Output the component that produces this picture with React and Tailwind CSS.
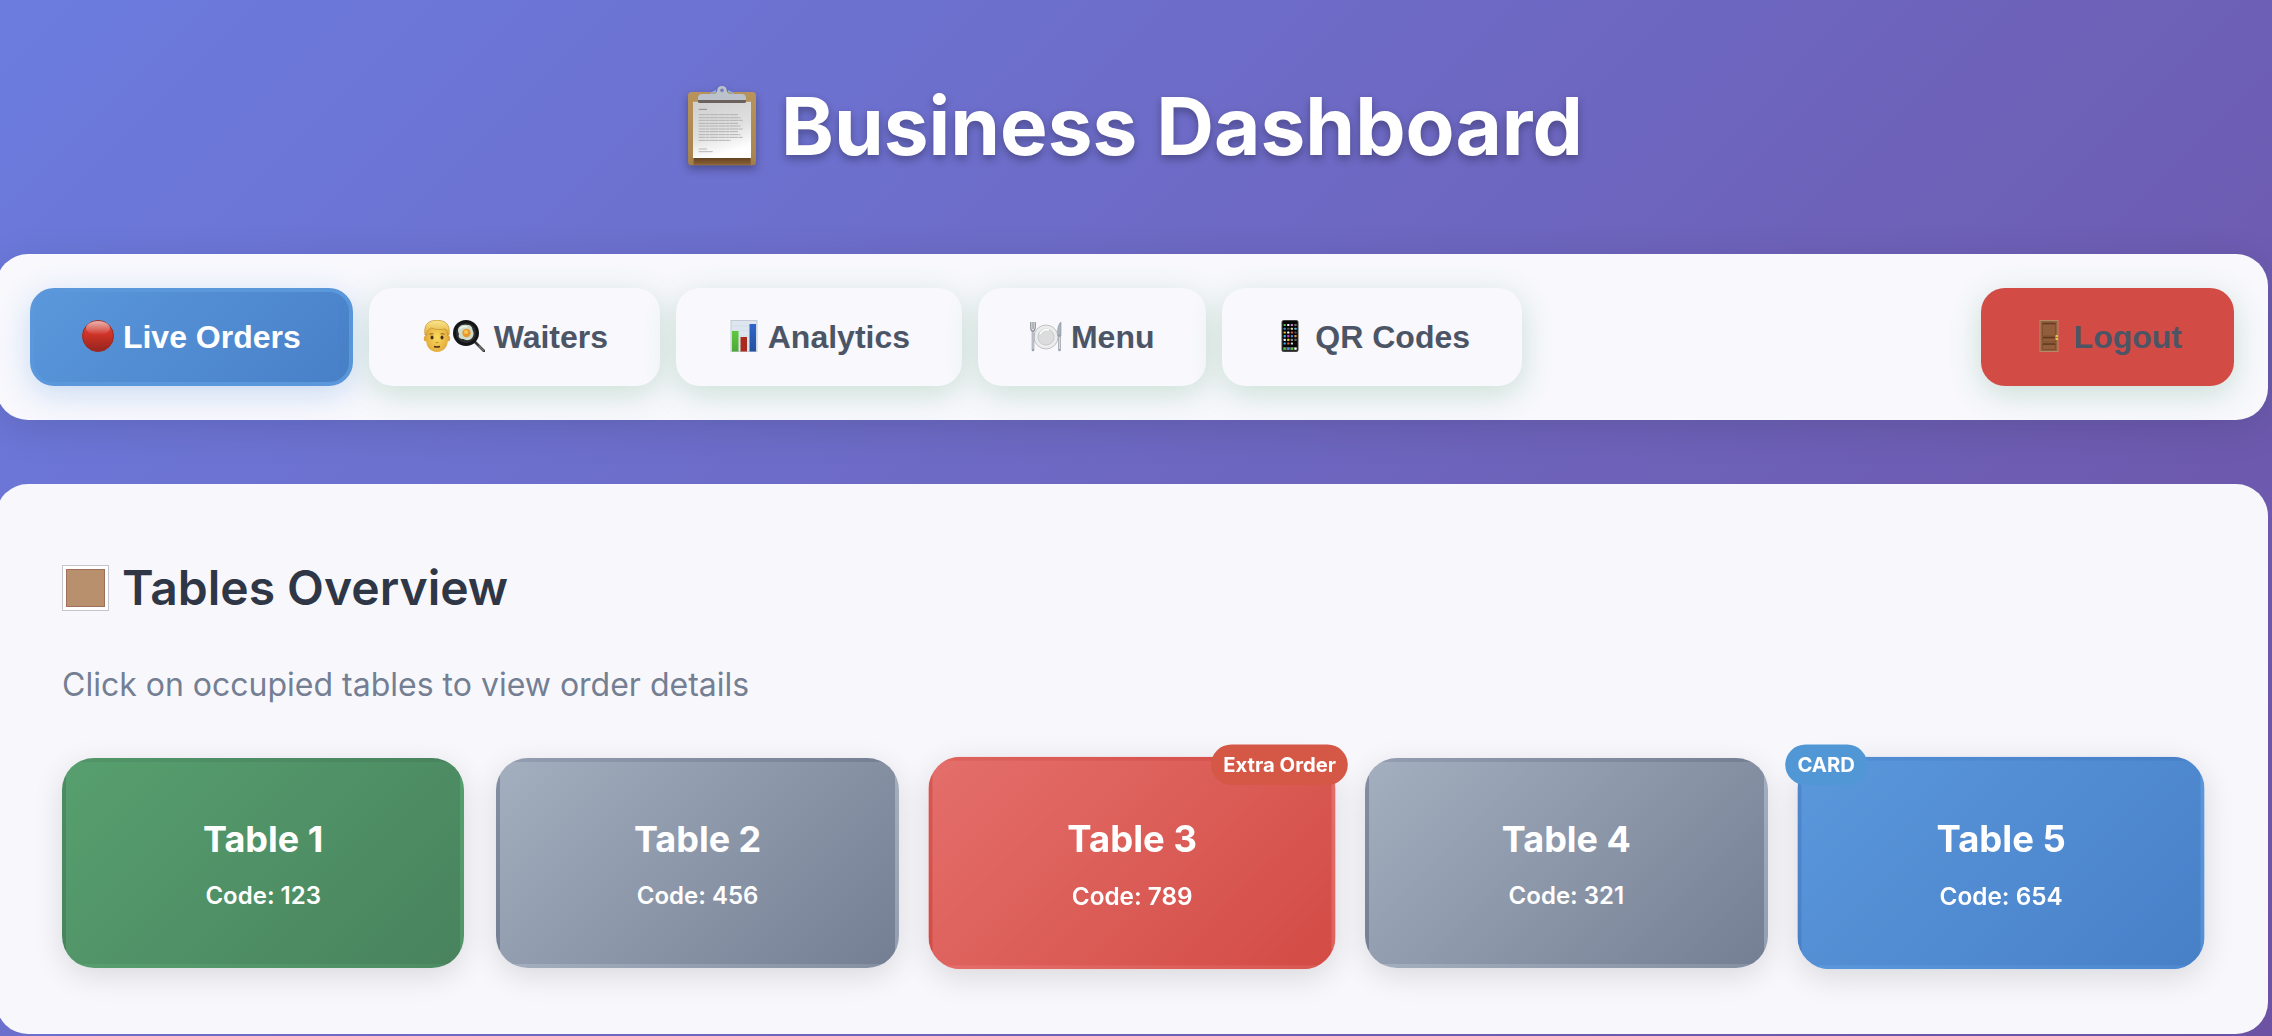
import { useState } from 'react'
import clsx from 'clsx'

function ClipboardIcon({ className }) {
  const lines = [158, 167, 175, 184, 192, 201, 209, 218, 226, 235]
  return (
    <svg viewBox="63 75 240 240" className={className} aria-hidden="true">
      <defs>
        <linearGradient id="board" x1="0" y1="0" x2="0" y2="1">
          <stop offset="0" stopColor="#b8935a" />
          <stop offset="0.85" stopColor="#a98550" />
          <stop offset="1" stopColor="#a07c4b" />
        </linearGradient>
        <linearGradient id="paper" x1="0" y1="0" x2="0.3" y2="1">
          <stop offset="0" stopColor="#cfcfcf" />
          <stop offset="0.6" stopColor="#e0e0e0" />
          <stop offset="1" stopColor="#ffffff" />
        </linearGradient>
        <linearGradient id="paperShade" x1="0" y1="0" x2="0" y2="1">
          <stop offset="0" stopColor="#5d3f1f" />
          <stop offset="1" stopColor="#8a6035" />
        </linearGradient>
      </defs>
      <rect x="84" y="93" width="204" height="220" rx="11" fill="url(#board)" />
      <path d="M101 288h171v23H101z" fill="url(#paperShade)" />
      <path d="M99 122h174v169H99z" fill="url(#paper)" />
      <path d="M99 288h174v3H99z" fill="#fff" />
      <path d="M116 145h25" stroke="#8d8d8d" strokeWidth="3" />
      {lines.map((y, i) => (
        <path key={y} d={`M116 ${y + 3}h${i === 9 ? 96 : 118 + (i % 3) * 7}`} stroke="#b2b2b2" strokeWidth="3" strokeDasharray="19 1 12 1 26 1" />
      ))}
      <path d="M116 264h25M116 272h42" stroke="#b8b8b8" strokeWidth="3" />
      <path d="M114 116h144v6q0 4-5 4H119q-5 0-5-4z" fill="#6b625c" />
      <path d="M152 98l16-9M220 98l-16-9" stroke="#8fb0dc" strokeWidth="5" />
      <path d="M114 117v-6q0-12 13-12h30c11 0 14-4 15-13 1-7 6-11 14-11s13 4 14 11c1 9 4 13 15 13h30q13 0 13 12v6z" fill="#bcc2cb" />
      <circle cx="186" cy="88" r="5" fill="#6a70c8" stroke="#939aa8" strokeWidth="2" />
    </svg>
  )
}

function RedCircleIcon({ className }) {
  return (
    <svg viewBox="0 0 32 32" className={className} aria-hidden="true">
      <defs>
        <linearGradient id="ball" x1="0" y1="0" x2="0" y2="1">
          <stop offset="0" stopColor="#d4534b" />
          <stop offset="0.45" stopColor="#cf3226" />
          <stop offset="1" stopColor="#93251f" />
        </linearGradient>
        <linearGradient id="gloss" x1="0" y1="0" x2="0" y2="1">
          <stop offset="0" stopColor="#fff" stopOpacity="0.55" />
          <stop offset="1" stopColor="#fff" stopOpacity="0" />
        </linearGradient>
      </defs>
      <circle cx="16" cy="16" r="15.5" fill="url(#ball)" stroke="#a02a22" />
      <ellipse cx="16" cy="8" rx="12" ry="7" fill="url(#gloss)" />
    </svg>
  )
}

function CookIcon({ className }) {
  return (
    <svg viewBox="0 0 64 32" className={className} aria-hidden="true">
      <defs>
        <radialGradient id="face" cx="0.5" cy="0.5" r="0.6">
          <stop offset="0" stopColor="#fadb5c" />
          <stop offset="1" stopColor="#e0a63a" />
        </radialGradient>
        <linearGradient id="hair" x1="0" y1="0" x2="0" y2="1">
          <stop offset="0" stopColor="#fae68c" />
          <stop offset="1" stopColor="#e3ae3a" />
        </linearGradient>
      </defs>
      <ellipse cx="4.6" cy="18.5" rx="1.8" ry="2.8" fill="#dfa638" />
      <ellipse cx="27.4" cy="18.5" rx="1.8" ry="2.8" fill="#dfa638" />
      <path d="M5 11c1-6 5-8 11-8s10 2 11 8v8c0 8-4.5 13-11 13S5 27 5 19z" fill="url(#face)" />
      <path d="M4 15C2.500 5 7 .3 16 .3S29.500 5 28 15l-1.300.5c0-3-.7-5.200-2-6.500-6 1-11 .5-14.500-1C7.500 9 6 11 5.300 15.500z" fill="url(#hair)" stroke="#c4902c" strokeWidth="0.7" />
      <path d="M8.5 14.500q2-1.500 4-.5M19.500 14q2-1 4 .5" fill="none" stroke="#a9742a" strokeWidth="1.2" />
      <ellipse cx="11" cy="17.5" rx="1.5" ry="2" fill="#4a2f18" />
      <ellipse cx="21" cy="17.5" rx="1.5" ry="2" fill="#4a2f18" />
      <path d="M14.500 22.500h3" stroke="#c98d2c" strokeWidth="1.2" />
      <path d="M13 26.500q3 1 6 0" fill="none" stroke="#5b2e17" strokeWidth="1.4" />
      <path d="M54 22l9 9" stroke="#3a3a3a" strokeWidth="2.6" strokeLinecap="round" />
      <path d="M58 26l4.500 4.500" stroke="#777" strokeWidth="1.2" strokeLinecap="round" />
      <circle cx="45" cy="13" r="13" fill="#141516" />
      <circle cx="45" cy="13" r="10" fill="#2c2e30" />
      <path d="M37.500 8c1.500-3 5-4 9-3 3 0 5 2 5 5 2 3 1 7-1.500 9-3 2-6 1-7.500 0-4 0-5.500-2-4.500-5-1-2-1.500-4-.5-6z" fill="#cfdccb" />
      <path d="M39 9c1-2 4-3 7-2" fill="none" stroke="#f1f6ee" strokeWidth="1.4" />
      <circle cx="45.500" cy="13" r="4.2" fill="#e9992a" />
      <circle cx="45" cy="12" r="2" fill="#f8c860" />
    </svg>
  )
}

function BarsIcon({ className }) {
  return (
    <svg viewBox="0 0 32 32" className={className} aria-hidden="true">
      <defs>
        <linearGradient id="green" x1="0" y1="0" x2="0" y2="1">
          <stop offset="0" stopColor="#5ec93f" />
          <stop offset="1" stopColor="#4fa638" />
        </linearGradient>
        <linearGradient id="blue" x1="0" y1="0" x2="0" y2="1">
          <stop offset="0" stopColor="#2f66cc" />
          <stop offset="1" stopColor="#2450a0" />
        </linearGradient>
      </defs>
      <rect x="3" y="0.5" width="26" height="31" fill="#dde6ef" stroke="#c3ccd6" />
      <path d="M4 6h24M4 11h24M4 16h24M4 21h24M4 26h24" stroke="#cdd8e4" strokeWidth="0.7" />
      <rect x="4" y="11" width="6.5" height="20.5" fill="url(#green)" />
      <rect x="12.5" y="17" width="6.5" height="14.5" fill="#ab2a1e" />
      <rect x="21.5" y="4" width="6.5" height="27.5" fill="url(#blue)" />
    </svg>
  )
}

function PlateIcon({ className }) {
  return (
    <svg viewBox="0 0 32 32" className={className} aria-hidden="true">
      <circle cx="16" cy="17" r="12" fill="#ececec" stroke="#b5b5b5" strokeWidth="0.8" />
      <circle cx="16" cy="17" r="8" fill="#dcdcdc" stroke="#c3cbd2" />
      <path d="M10 14a7 7 0 0 1 9-4" fill="none" stroke="#fff" strokeWidth="1.5" />
      <path d="M0.8 2v6q0 3 2 3t2.400-3V2M3 2v7" fill="none" stroke="#8e9297" strokeWidth="1.3" />
      <path d="M3 11v19" stroke="#9aa1a9" strokeWidth="2.6" strokeLinecap="round" />
      <path d="M3 12v17" stroke="#d4dbe3" />
      <path d="M31 2c-3 2-4 8-3 14h3z" fill="#a9b3bd" stroke="#7f8790" strokeWidth="0.5" />
      <path d="M29.500 16v14" stroke="#9aa1a9" strokeWidth="2.6" strokeLinecap="round" />
      <path d="M29.500 17v12" stroke="#d4dbe3" />
    </svg>
  )
}

const APP_ROWS = [
  ['#4fc34a', '#f2f2f2', '#d07fd8', '#777777'],
  ['#3f93e0', '#555555', '#e8d7a0', '#5bb7e8'],
  ['#f0c63a', '#ffffff', '#e0563f', '#555555'],
  ['#46b6e0', '#d63fc0', '#3e8ce6', '#f08a2c'],
  ['#f2f2f2', '#efcf3f', '#8a8a8a', '#666666'],
  ['#4aa8ee', '#e2604a', '#d8d8d8', '#111111'],
]

function PhoneIcon({ className }) {
  return (
    <svg viewBox="0 0 32 32" className={className} aria-hidden="true">
      <rect x="8" y="0.5" width="16" height="31" rx="1.5" fill="#060606" stroke="#444" />
      {APP_ROWS.map((row, r) =>
        row.map((fill, c) => (
          <rect key={`${r}-${c}`} x={9.6 + c * 3.6} y={4 + r * 3.7} width="2.2" height="2.1" rx="0.5" fill={fill} />
        ))
      )}
      <rect x="9" y="27" width="14" height="3.5" fill="#4a4a4a" />
      {['#55cc44', '#48a4f0', '#55cc44', '#ffffff'].map((fill, c) => (
        <rect key={c} x={9.6 + c * 3.6} y="27.5" width="2.2" height="2.3" rx="0.5" fill={fill} />
      ))}
    </svg>
  )
}

function DoorIcon({ className }) {
  return (
    <svg viewBox="0 0 32 32" className={className} aria-hidden="true">
      <rect x="7" y="0.5" width="18" height="31" fill="#95603d" stroke="#b58a68" />
      <path d="M9.500 3.500h13v12.500h-13zM9.500 18h13v4h-13zM9.500 24.500h13v5h-13z" fill="#915d3a" stroke="#7a4b2c" strokeWidth="0.8" />
      <path d="M9.500 3.500h13M9.500 17.500h13M9.500 24h13" stroke="#633a21" strokeWidth="1.3" />
      <rect x="22.5" y="15" width="2.5" height="5" rx="0.5" fill="#e6c34a" />
      <path d="M22.500 17.500h2.500" stroke="#8a6a1c" strokeWidth="0.8" />
    </svg>
  )
}

function FrameIcon({ className }) {
  return (
    <svg viewBox="0 0 48 48" className={className} aria-hidden="true">
      <rect x="0.5" y="1.5" width="46" height="45" fill="#fff" stroke="#c4c5ca" />
      <rect x="4.5" y="5.5" width="38" height="37" fill="#b8906d" stroke="#a1705a" />
    </svg>
  )
}

const TABS = [
  { id: 'orders', label: 'Live Orders', Icon: RedCircleIcon },
  { id: 'waiters', label: 'Waiters', Icon: CookIcon, wide: true },
  { id: 'analytics', label: 'Analytics', Icon: BarsIcon },
  { id: 'menu', label: 'Menu', Icon: PlateIcon },
  { id: 'qr', label: 'QR Codes', Icon: PhoneIcon },
]

const TABLES = [
  { id: 1, code: '123', status: 'paid' },
  { id: 2, code: '456', status: 'free' },
  { id: 3, code: '789', status: 'occupied', badge: 'Extra Order' },
  { id: 4, code: '321', status: 'free' },
  { id: 5, code: '654', status: 'card', badge: 'CARD' },
]

const STATUS_STYLES = {
  paid: 'from-[#579f6e] to-[#48835e]',
  free: 'from-[#a3aebe] to-[#747f94]',
  occupied: 'from-[#e46e6a] to-[#d34b45] scale-[1.013]',
  card: 'from-[#5a97db] to-[#4880c8] scale-[1.013]',
}

const BADGE_STYLES = {
  occupied: '-right-4 bg-[#d55745]',
  card: '-left-4 bg-[#5197d6]',
}

function NavButton({ label, Icon, wide, className, onClick }) {
  return (
    <button
      type="button"
      onClick={onClick}
      className={clsx(
        'rounded-3xl border-4 px-12 py-[26px] text-[32px] leading-[38px] font-bold whitespace-nowrap',
        className
      )}
    >
      <Icon className={clsx('inline-block h-8 align-[-4px]', wide ? 'w-16' : 'w-8')} />
      {` ${label}`}
    </button>
  )
}

function TableCard({ table }) {
  return (
    <button
      type="button"
      className={clsx(
        'relative flex flex-col items-center gap-3 rounded-[32px] border-4 border-transparent bg-linear-135 pt-12 pb-13 text-white shadow-[0_8px_30px_rgba(0,0,0,0.12)]',
        STATUS_STYLES[table.status]
      )}
    >
      <span className="text-4xl leading-[58px] font-bold">Table {table.id}</span>
      <span className="text-2xl font-semibold">Code: {table.code}</span>
      {table.badge && (
        <span className={clsx('absolute -top-4 rounded-full px-3 py-2 text-xl leading-6 font-bold', BADGE_STYLES[table.status])}>
          {table.badge}
        </span>
      )}
    </button>
  )
}

export default function App() {
  const [tab, setTab] = useState('orders')

  return (
    <div className="min-h-screen overflow-hidden bg-linear-135 from-[#6b7cdf] to-[#6c4d9d] to-112% pb-0.5 font-['Inter',sans-serif]">
      <div className="mr-1 -ml-1">
        <header className="flex items-center justify-center gap-5 pt-[78px] pb-20">
          <ClipboardIcon className="size-20 shrink-0 drop-shadow-[0_4px_4px_rgba(0,0,0,0.3)]" />
          <h1 className="text-[80px] leading-[96px] font-bold text-white text-shadow-[0_4px_8px_rgba(0,0,0,0.3)]">
            Business Dashboard
          </h1>
        </header>

        <nav className="flex items-center gap-4 rounded-[32px] bg-[#f8f8fd] p-[34px] font-['Liberation_Sans',Arial,sans-serif] shadow-[0_8px_40px_rgba(0,0,0,0.12)]">
          {TABS.map(t => (
            <NavButton
              key={t.id}
              label={t.label}
              Icon={t.Icon}
              wide={t.wide}
              onClick={() => setTab(t.id)}
              className={
                tab === t.id
                  ? 'border-[#5a97db] bg-linear-135 from-[#5a97db] to-[#4880c8] text-white shadow-[0_8px_30px_rgba(90,151,219,0.3)]'
                  : 'border-transparent bg-[#f8f8fd] text-[#4c5566] shadow-[0_8px_30px_rgba(72,150,94,0.25)]'
              }
            />
          ))}
          <NavButton
            label="Logout"
            Icon={DoorIcon}
            className="ml-auto border-transparent bg-[#d34b45] text-[#4c5566] shadow-[0_8px_30px_rgba(72,150,94,0.25)]"
          />
        </nav>

        <main className="mt-16 rounded-[32px] bg-[#f8f8fc] px-[66px] pt-[68px] pb-[66px]">
          <div className="flex items-center gap-3">
            <FrameIcon className="size-12 shrink-0" />
            <h2 className="text-5xl leading-[72px] font-semibold text-[#2f3747]">Tables Overview</h2>
          </div>
          <p className="mt-9 text-[32px] leading-[50px] text-[#747f94]">Click on occupied tables to view order details</p>
          <div className="mt-12 grid grid-cols-5 gap-8">
            {TABLES.map(t => (
              <TableCard key={t.id} table={t} />
            ))}
          </div>
        </main>
      </div>
    </div>
  )
}
